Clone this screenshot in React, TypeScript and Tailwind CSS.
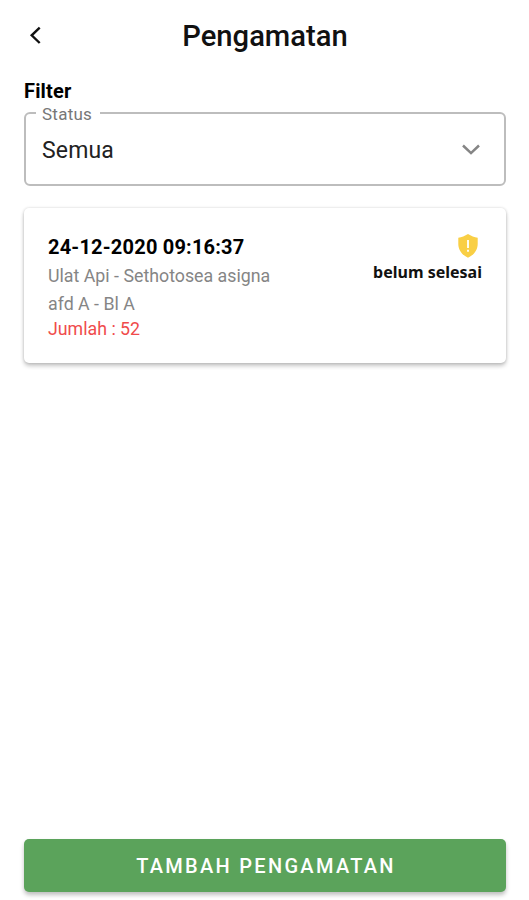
import React from "react";

function Header() {
  return (
    <header className="flex h-[72px] items-center pl-[24px] pr-[24px]">
      <button type="button" aria-label="Kembali" className="flex h-6 w-6 items-center justify-center">
        <svg width="24" height="24" viewBox="0 0 24 24" fill="none" stroke="#111111" strokeWidth="2.4">
          <path d="M15.7 3.6 7.7 11.3 15.7 19" />
        </svg>
      </button>
      <h1 className="flex-1 pr-[23px] text-center text-[29.2px] leading-[34px] font-medium text-[#111111]">
        Pengamatan
      </h1>
    </header>
  );
}

function StatusSelect() {
  return (
    <fieldset className="h-[82px] rounded-[6px] border-2 border-[#bdbdbd] pl-[10px] pr-[21px]">
      <legend className="h-[18px] w-[64px] pl-[6px] text-[17px] leading-[20px] tracking-[0.25px] text-[#777777]">Status</legend>
      <div className="flex h-[56px] items-center justify-between pl-[6px]">
        <span className="pt-[2px] text-[23px] leading-[28px] tracking-[0.15px] text-[#222222]">Semua</span>
        <svg width="24" height="24" viewBox="0 0 24 24" fill="none" stroke="#858585" strokeWidth="2.5">
          <path d="m4 7.5 8 7.6 8-7.6" />
        </svg>
      </div>
    </fieldset>
  );
}

function ObservationCard() {
  return (
    <article className="flex h-[155px] justify-between rounded-[5px] bg-white px-6 pt-[27px] shadow-[0_3px_4px_rgba(0,0,0,0.22),0_0_3px_rgba(0,0,0,0.16)]">
      <div>
        <h2 className="text-[20px] leading-6 font-bold tracking-[0.2px] text-black">24-12-2020 09:16:37</h2>
        <p className="mt-[3px] text-[17.8px] leading-[28px] text-[#858585]">Ulat Api - Sethotosea asigna</p>
        <p className="text-[17.8px] leading-[28px] text-[#858585]">afd A - Bl A</p>
        <p className="text-[17.8px] leading-[22px] text-[#f04b4b]">Jumlah : 52</p>
      </div>
      <div className="flex flex-col items-end">
        <svg className="-mt-[1px] mr-[3px]" width="22" height="24" viewBox="0 0 22 24">
          <path d="M11 0C8 2 4.5 3.3 1.3 3.7V10c0 6.2 4 11.2 9.7 13.7 5.7-2.5 9.7-7.5 9.7-13.7V3.7C17.5 3.3 14 2 11 0Z" fill="#f9cf45" />
          <path d="M10 6h2v8h-2zM10 15.7h2v2h-2z" fill="#fffdf0" />
        </svg>
        <span className="mt-[3px] font-['Noto_Sans',sans-serif] text-[16px] leading-[22px] font-bold text-[#111111]">
          belum selesai
        </span>
      </div>
    </article>
  );
}

export default function App() {
  return (
    <main className="flex h-[900px] w-full flex-col overflow-hidden bg-white font-['Roboto',sans-serif]">
      <Header />
      <section className="pl-6 pr-[23px] pt-[7px]">
        <h2 className="mb-px h-[24px] text-[20px] leading-6 font-bold tracking-[0.15px] text-black">Filter</h2>
        <StatusSelect />
      </section>
      <section className="pl-6 pr-[23px] pt-[22px]">
        <ObservationCard />
      </section>
      <footer className="mt-auto pl-6 pr-[23px] pb-[8px]">
        <button
          type="button"
          className="flex h-[53px] w-full items-center justify-center rounded-[5px] bg-[#5ba35b] pl-[2px] text-[20px] font-medium tracking-[2.3px] text-white shadow-[0_3px_4px_rgba(0,0,0,0.25)]"
        >
          TAMBAH PENGAMATAN
        </button>
      </footer>
    </main>
  );
}
